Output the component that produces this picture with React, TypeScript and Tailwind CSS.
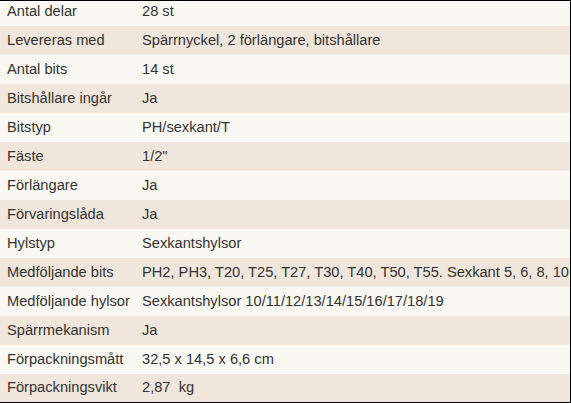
import React from "react";

const rows: [string, string][] = [
  ["Antal delar", "28 st"],
  ["Levereras med", "Spärrnyckel, 2 förlängare, bitshållare"],
  ["Antal bits", "14 st"],
  ["Bitshållare ingår", "Ja"],
  ["Bitstyp", "PH/sexkant/T"],
  ["Fäste", "1/2\""],
  ["Förlängare", "Ja"],
  ["Förvaringslåda", "Ja"],
  ["Hylstyp", "Sexkantshylsor"],
  ["Medföljande bits", "PH2, PH3, T20, T25, T27, T30, T40, T50, T55. Sexkant 5, 6, 8, 10"],
  ["Medföljande hylsor", "Sexkantshylsor 10/11/12/13/14/15/16/17/18/19"],
  ["Spärrmekanism", "Ja"],
  ["Förpackningsmått", "32,5 x 14,5 x 6,6 cm"],
  ["Förpackningsvikt", "2,87  kg"],
];

export default function App() {
  return (
    <div className="w-[571px] h-[403px] overflow-hidden border-t border-r border-b border-black bg-[#faf8f2] text-[14.65px] text-[#333333] font-['Liberation_Sans',Arial,sans-serif]">
      {rows.map(([k, v], i) => {
        const dark = i % 2 === 1;
        const h =
          i === 0 ? "h-[25px] pb-[4px]" : i === rows.length - 1 ? "h-[28px]" : "h-[29px]";
        return (
          <div
            key={k}
            className={`flex items-center whitespace-pre overflow-hidden ${h} ${dark ? "bg-[#f0e6dc]" : "bg-[#faf8f2]"}`}
          >
            <div className="w-[142px] shrink-0 pl-[7px]">{k}</div>
            <div className="flex-1 whitespace-pre">{v}</div>
          </div>
        );
      })}
    </div>
  );
}
